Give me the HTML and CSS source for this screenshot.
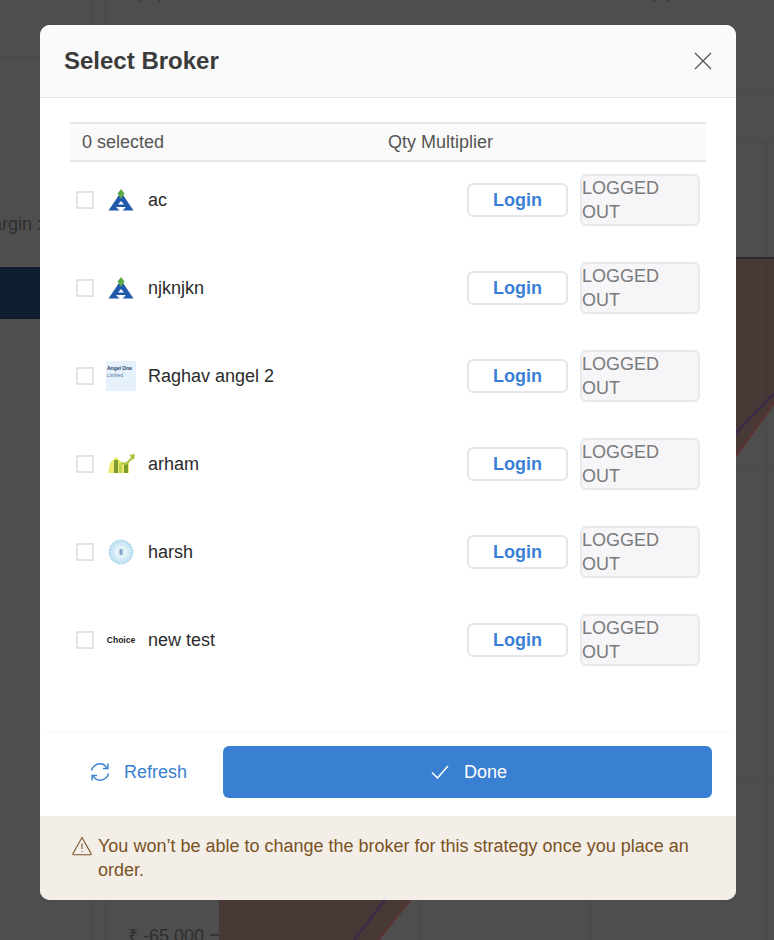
FILE: index.html
```html
<!DOCTYPE html>
<html>
<head>
	<link rel="stylesheet" href="styles.css">
</head>
<body>
	<svg class="backdrop" width="774" height="940" viewBox="0 0 774 940">
		<rect class="bd-navy" x="0" y="267" width="60" height="52"/>
		<polygon class="bd-area" points="219,258 774,258 774,403 736,456 410,900 378,940 219,940"/>
		<path class="bd-rule" d="M92 0V60M106 0V60M0 57H92M92 880V940M106 880V940M736 92H774M736 142H774M766 140V940M736 470H774M736 640H774M736 780H774M420 900V940M590 900V940"/>
		<path class="bd-top" d="M219 258H774"/>
		<path class="bd-purple" d="M774 393L736 433L385 900L354 940"/>
		<path class="bd-red" d="M774 403L736 456L410 900L378 940"/>
		<path class="bd-tick" d="M210 935H219"/>
		<text class="bd-text" x="-8" y="230">argin :</text>
		<text class="bd-text" x="128" y="942">₹ -65,000</text>
		<text class="bd-text" x="136" y="-3">(%)</text>
		<text class="bd-text" x="650" y="-3">(₹)</text>
	</svg>

	<div class="modal">
		<header class="modal-head">
			<h1>Select Broker</h1>
			<svg class="close" width="18" height="18" viewBox="0 0 18 18"><path d="M1 1L17 17M17 1L1 17"/></svg>
		</header>

		<main class="modal-body">
			<div class="list-head">
				<span class="count">0 selected</span>
				<span>Qty Multiplier</span>
			</div>

			<div class="rows">
				<div class="row">
					<span class="check"></span>
					<span class="logo">
						<svg width="26" height="22" viewBox="0 0 26 22"><path class="alice-blue" d="M13 3L25.5 21.5H14.5L18 18H8L11.5 21.5H0.5Z"/><path fill="#fff" d="M13 12L16 15.5H10Z"/><path class="alice-green" d="M13 0L16.5 4.5L13 10L9.5 4.5Z"/></svg>
					</span>
					<span class="name">ac</span>
					<button class="login">Login</button>
					<div class="status">LOGGED OUT</div>
				</div>
				<div class="row">
					<span class="check"></span>
					<span class="logo">
						<svg width="26" height="22" viewBox="0 0 26 22"><path class="alice-blue" d="M13 3L25.5 21.5H14.5L18 18H8L11.5 21.5H0.5Z"/><path fill="#fff" d="M13 12L16 15.5H10Z"/><path class="alice-green" d="M13 0L16.5 4.5L13 10L9.5 4.5Z"/></svg>
					</span>
					<span class="name">njknjkn</span>
					<button class="login">Login</button>
					<div class="status">LOGGED OUT</div>
				</div>
				<div class="row">
					<span class="check"></span>
					<span class="logo logo-angel"><b>Angel One</b><i>Limited</i></span>
					<span class="name">Raghav angel 2</span>
					<button class="login">Login</button>
					<div class="status">LOGGED OUT</div>
				</div>
				<div class="row">
					<span class="check"></span>
					<span class="logo">
						<svg width="28" height="20" viewBox="0 0 28 20">
							<path fill="#eeea6c" d="M1 19L3 9L9 3L16 9L22 8V19Z"/>
							<path fill="#7b9a2f" d="M7 6H11V19H7ZM17 10H21V19H17Z"/>
							<path fill="#c3cf52" d="M12 9H15V19H12Z"/>
							<path fill="none" stroke="#a9c53d" stroke-width="2.2" d="M15 9L19 10L26 3"/>
							<path fill="#a9c53d" d="M22 1L28 0L27 6Z"/>
						</svg>
					</span>
					<span class="name">arham</span>
					<button class="login">Login</button>
					<div class="status">LOGGED OUT</div>
				</div>
				<div class="row">
					<span class="check"></span>
					<span class="logo">
						<svg width="26" height="26" viewBox="0 0 26 26">
							<circle cx="13" cy="13" r="12.5" fill="#cfe7f6"/>
							<circle cx="13" cy="13" r="11" fill="none" stroke="#aad5ee" stroke-width="2" stroke-dasharray="1.5 1.5"/>
							<circle cx="13" cy="13" r="7" fill="#e2f1fa"/>
							<rect x="11.5" y="10" width="3" height="6" rx="1.2" fill="#7ea4cc"/>
						</svg>
					</span>
					<span class="name">harsh</span>
					<button class="login">Login</button>
					<div class="status">LOGGED OUT</div>
				</div>
				<div class="row">
					<span class="check"></span>
					<span class="logo logo-choice">Choice</span>
					<span class="name">new test</span>
					<button class="login">Login</button>
					<div class="status">LOGGED OUT</div>
				</div>
			</div>
		</main>

		<div class="actions">
			<button class="refresh">
				<svg width="20" height="20" viewBox="0 0 20 20"><path d="M1.5 8.5C2.3 4.6 5.8 1.8 9.8 1.8C12.8 1.8 15.4 3.4 16.9 5.8"/><path d="M18 1.5V6.5H13"/><path d="M18.5 11.5C17.7 15.4 14.2 18.2 10.2 18.2C7.2 18.2 4.6 16.6 3.1 14.2"/><path d="M2 18.5V13.5H7"/></svg>
				Refresh
			</button>
			<button class="done">
				<svg width="18" height="14" viewBox="0 0 18 14"><path d="M1 7.5L6.5 13L17 1"/></svg>
				Done
			</button>
		</div>

		<div class="notice">
			<svg width="20" height="20" viewBox="0 0 20 20"><path d="M10 1.5L19 17.5C19.3 18.2 19 18.8 18.2 18.8H1.8C1 18.8 0.7 18.2 1 17.5Z"/><path d="M10 7.5V13M10 15V16"/></svg>
			<p>You won’t be able to change the broker for this strategy once you place an order.</p>
		</div>
	</div>
</body>
</html>
```

FILE: styles.css
```css
* {
	box-sizing: border-box;
}

html,
body {
	height: 100%;
}

body {
	margin: 0;
	overflow: hidden;
	background: #4e4e4e;
	font-family: "Liberation Sans", Arial, sans-serif;
	font-size: 18px;
	color: #333;
}

/* page behind the dialog */
.backdrop {
	position: absolute;
	top: 0;
	left: 0;
}

.bd-navy {
	fill: #0e1e30;
}

.bd-area {
	fill: #483836;
}

.bd-rule {
	fill: none;
	stroke: rgba(0, 0, 0, 0.07);
	stroke-width: 1;
}

.bd-top {
	stroke: #2e2a2a;
	stroke-width: 2;
}

.bd-purple,
.bd-red {
	fill: none;
	stroke-width: 2.5;
}

.bd-purple {
	stroke: #3a2b4a;
}

.bd-red {
	stroke: #5a3433;
}

.bd-tick {
	stroke: #2e2e2e;
	stroke-width: 1.5;
}

.bd-text {
	fill: #2e2e2e;
	font-size: 18px;
}

/* dialog */
.modal {
	position: absolute;
	top: 25px;
	left: 40px;
	display: flex;
	flex-direction: column;
	width: 696px;
	height: 875px;
	overflow: hidden;
	border-radius: 10px;
	background: #fff;
}

.modal-head {
	display: flex;
	flex: none;
	align-items: center;
	justify-content: space-between;
	height: 73px;
	padding: 0 24px;
	border-bottom: 1px solid #e6e6e6;
	background: #fafafa;
}

.modal-head h1 {
	margin: 0;
	font-size: 24px;
	font-weight: 700;
	color: #3b3b3b;
}

.close path {
	fill: none;
	stroke: #555;
	stroke-width: 1.3;
}

.modal-body {
	flex: 1;
	padding: 24px 30px 0;
}

.list-head {
	display: flex;
	align-items: center;
	height: 40px;
	padding-left: 12px;
	border-top: 2px solid #e6e6e6;
	border-bottom: 2px solid #e6e6e6;
	background: #fafafa;
	color: #555;
}

.count {
	width: 306px;
}

.rows {
	display: flex;
	flex-direction: column;
	gap: 36px;
	padding: 12px 6px 0;
}

.row {
	display: flex;
	align-items: center;
	height: 52px;
}

.check {
	flex: none;
	width: 18px;
	height: 18px;
	border: 2px solid #e3e3e3;
	background: #fff;
}

.logo {
	display: flex;
	flex: none;
	align-items: center;
	justify-content: center;
	width: 30px;
	height: 30px;
	margin-left: 12px;
}

.alice-green {
	fill: #5aa846;
}

.alice-blue {
	fill: #2259ad;
}

.logo-angel {
	flex-direction: column;
	align-items: flex-start;
	justify-content: flex-start;
	padding: 4px 1px 0;
	background: #e6f1fb;
	font-size: 5px;
	line-height: 7px;
	white-space: nowrap;
}

.logo-angel b {
	color: #1f3f68;
}

.logo-angel i {
	font-style: normal;
	color: #4a78ab;
}

.logo-choice {
	font-size: 8.5px;
	font-weight: 700;
	color: #222;
}

.name {
	margin-left: 12px;
	color: #2b2b2b;
}

button {
	font-family: inherit;
	font-size: 18px;
	cursor: pointer;
}

.login {
	width: 101px;
	height: 34px;
	margin-left: auto;
	padding: 0;
	border: 2px solid #e6e6e6;
	border-radius: 6px;
	background: #fff;
	font-weight: 700;
	color: #3a7fd5;
}

.status {
	width: 120px;
	height: 52px;
	margin-left: 12px;
	border: 2px solid #e8e8ec;
	border-radius: 6px;
	background: #f6f6f8;
	line-height: 24px;
	color: #7a7a7a;
}

.actions {
	display: flex;
	flex: none;
	align-items: flex-start;
	height: 83px;
	padding: 13px 24px 0;
	background: #fff;
	box-shadow: 0 -3px 6px rgba(0, 0, 0, 0.025);
}

.refresh {
	display: flex;
	align-items: center;
	gap: 14px;
	width: 159px;
	height: 52px;
	padding: 0 0 0 26px;
	border: 0;
	background: none;
	color: #3a80d2;
}

.refresh path {
	fill: none;
	stroke: #3a80d2;
	stroke-width: 1.4;
}

.done {
	display: flex;
	flex: 1;
	align-items: center;
	justify-content: center;
	gap: 15px;
	height: 52px;
	padding: 0 0 0 3px;
	border: 0;
	border-radius: 6px;
	background: #3a80d2;
	color: #fff;
}

.done path {
	fill: none;
	stroke: #fff;
	stroke-width: 1.5;
}

.notice {
	display: flex;
	flex: none;
	gap: 6px;
	height: 84px;
	padding: 18px 32px 0;
	background: #f3eee8;
	color: #7a5223;
}

.notice svg {
	flex: none;
	margin-top: 2px;
}

.notice path {
	fill: none;
	stroke: #7a5223;
	stroke-width: 1.1;
}

.notice p {
	margin: 0;
	line-height: 24px;
}
```
